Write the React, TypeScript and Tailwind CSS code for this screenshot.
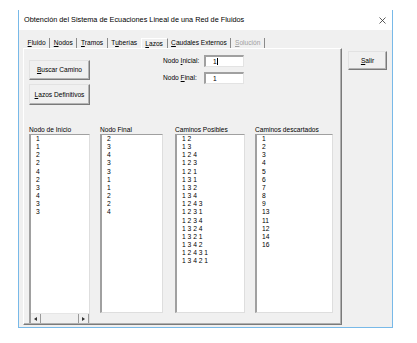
import React from "react"

const inicio = ["1", "1", "2", "2", "4", "2", "3", "4", "3", "3"]
const final = ["2", "3", "4", "3", "3", "1", "1", "2", "2", "4"]
const posibles = [
  "1 2", "1 3", "1 2 4", "1 2 3", "1 2 1", "1 3 1", "1 3 2", "1 3 4",
  "1 2 4 3", "1 2 3 1", "1 2 3 4", "1 3 2 4", "1 3 2 1", "1 3 4 2",
  "1 2 4 3 1", "1 3 4 2 1",
]
const descartados = ["1", "2", "3", "4", "5", "6", "7", "8", "9", "13", "11", "12", "14", "16"]

function Key({ children }: { children: React.ReactNode }) {
  return <span className="underline underline-offset-[1px] decoration-[0.6px]">{children}</span>
}

const tabs = [
  { pre: "", key: "F", rest: "luido" },
  { pre: "", key: "N", rest: "odos" },
  { pre: "", key: "T", rest: "ramos" },
  { pre: "T", key: "u", rest: "berías" },
  { pre: "", key: "L", rest: "azos" },
  { pre: "", key: "C", rest: "audales Externos" },
  { pre: "", key: "S", rest: "olución" },
]

function Button({ children, className = "" }: { children: React.ReactNode; className?: string }) {
  return (
    <div
      className={`flex items-center justify-center bg-[#f0f0f0] border border-t-[#e2e2e2] border-l-[#e2e2e2] border-r-[#7a7a7a] border-b-[#7a7a7a] shadow-[inset_-1px_-1px_0_#b4b4b4] text-[6.6px] ${className}`}
    >
      {children}
    </div>
  )
}

function ListBox({ items, className = "" }: { items: string[]; className?: string }) {
  return (
    <div className={`bg-white border-l-2 border-t border-l-[#a0a0a0] border-t-[#a0a0a0] border-r border-b border-r-[#dedede] border-b-[#dedede] pl-[5px] text-[6.7px] leading-[8.15px] whitespace-pre ${className}`}>
      {items.map((it, i) => (
        <div key={i}>{it}</div>
      ))}
    </div>
  )
}

export default function App() {
  return (
    <div className="w-[417px] h-[343px] bg-white pt-[10px] font-['Liberation_Sans',Arial,sans-serif] text-black">
      <div className="ml-[18px] w-[375px] h-[318px] border-x border-b border-[#78b9e8] flex flex-col">
        {/* barra de titulo */}
        <div className="h-[20px] bg-white flex items-center justify-between pl-[5px] pr-[6px] text-[7.3px]">
          <span>Obtención del Sistema de Ecuaciones Lineal de una Red de Fluidos</span>
          <svg width="7" height="7" viewBox="0 0 7 7">
            <path d="M0.5 0.5 L6.5 6.5 M6.5 0.5 L0.5 6.5" stroke="#333" strokeWidth="0.8" />
          </svg>
        </div>

        <div className="flex-1 bg-[#f0f0f0] flex pl-[4px] pt-[7px]">
          <div className="w-[319px] flex flex-col">
            {/* pestañas */}
            <div className="flex items-end h-[11px] text-[6.6px] leading-[9px] pl-[1px]">
              {tabs.map((t, i) => {
                const selected = i === 4
                const disabled = i === 6
                const noSep = i === 3
                return (
                  <div
                    key={i}
                    className={
                      selected
                        ? "h-[11px] px-[3.6px] pt-[0px] border-l border-t border-white border-r border-r-[#8a8a8a] bg-[#f0f0f0] -mb-px"
                        : `h-[10px] px-[3.6px] ${noSep ? "" : "border-r border-[#8a8a8a]"} ${disabled ? "text-[#a0a0a0]" : ""}`
                    }
                  >
                    {t.pre}
                    <Key>{t.key}</Key>
                    {t.rest}
                  </div>
                )
              })}
            </div>

            {/* panel */}
            <div className="h-[277px] border-l border-t border-white border-r border-b border-r-[#7a7a7a] border-b-[#7a7a7a] shadow-[inset_-1px_-1px_0_#b0b0b0] flex flex-col">
              <div className="h-[76px] flex">
                <div className="ml-[5px] pt-[11px] flex flex-col gap-[4px]">
                  <Button className="w-[61px] h-[20px]">
                    <span><Key>B</Key>uscar Camino</span>
                  </Button>
                  <Button className="w-[61px] h-[21px]">
                    <span><Key>L</Key>azos Definitivos</span>
                  </Button>
                </div>
                <div className="ml-[73px] pt-[6px] flex flex-col gap-[5px] text-[6.6px]">
                  <div className="flex items-center h-[12px]">
                    <span className="w-[41px]">Nodo <Key>I</Key>nicial:</span>
                    <div className="w-[40px] h-[12px] bg-white border-l-2 border-t-2 border-l-[#a0a0a0] border-t-[#a0a0a0] border-r border-b border-r-[#e3e3e3] border-b-[#e3e3e3] pl-[7px] flex items-center">
                      <span>1</span>
                      <span className="w-px h-[7px] bg-black" />
                    </div>
                  </div>
                  <div className="flex items-center h-[12px]">
                    <span className="w-[41px]">Nodo <Key>F</Key>inal:</span>
                    <div className="w-[40px] h-[12px] bg-white border-l-2 border-t-2 border-l-[#a0a0a0] border-t-[#a0a0a0] border-r border-b border-r-[#e3e3e3] border-b-[#e3e3e3] pl-[7px] flex items-center">
                      <span>1</span>
                    </div>
                  </div>
                </div>
              </div>

              <div className="flex items-start text-[6.6px]">
                <div className="ml-[5px] w-[61px] flex flex-col">
                  <div className="h-[9px] leading-[9px]">Nodo de Inicio</div>
                  <div className="h-[189px] flex flex-col bg-white border-l-2 border-t border-l-[#a0a0a0] border-t-[#a0a0a0] border-r border-r-[#dedede]">
                    <div className="flex-1 pl-[5px] text-[6.7px] leading-[8.15px]">
                      {inicio.map((it, i) => (
                        <div key={i}>{it}</div>
                      ))}
                    </div>
                    <div className="h-[10px] bg-[#f0f0f0] flex items-center border-t border-[#e6e6e6]">
                      <div className="w-[10px] h-full flex items-center justify-center border-r border-[#9a9a9a]">
                        <svg width="3" height="4" viewBox="0 0 3 4"><path d="M3 0 L0 2 L3 4 Z" fill="#333" /></svg>
                      </div>
                      <div className="flex-1 h-full border-r border-[#9a9a9a]" />
                      <div className="w-[10px] h-full flex items-center justify-center border-r border-[#9a9a9a]">
                        <svg width="3" height="4" viewBox="0 0 3 4"><path d="M0 0 L3 2 L0 4 Z" fill="#333" /></svg>
                      </div>
                    </div>
                  </div>
                </div>
                <div className="ml-[10px] w-[63px] flex flex-col">
                  <div className="h-[9px] leading-[9px]">Nodo Final</div>
                  <ListBox items={final} className="h-[179px]" />
                </div>
                <div className="ml-[12px] w-[70px] flex flex-col">
                  <div className="h-[9px] leading-[9px]">Caminos Posibles</div>
                  <ListBox items={posibles} className="h-[179px]" />
                </div>
                <div className="ml-[10px] w-[78px] flex flex-col">
                  <div className="h-[9px] leading-[9px]">Caminos descartados</div>
                  <ListBox items={descartados} className="h-[179px]" />
                </div>
              </div>
            </div>
          </div>

          <div className="ml-[6px] mt-[14px]">
            <Button className="w-[39px] h-[19px]">
              <span><Key>S</Key>alir</span>
            </Button>
          </div>
        </div>
      </div>
    </div>
  )
}
